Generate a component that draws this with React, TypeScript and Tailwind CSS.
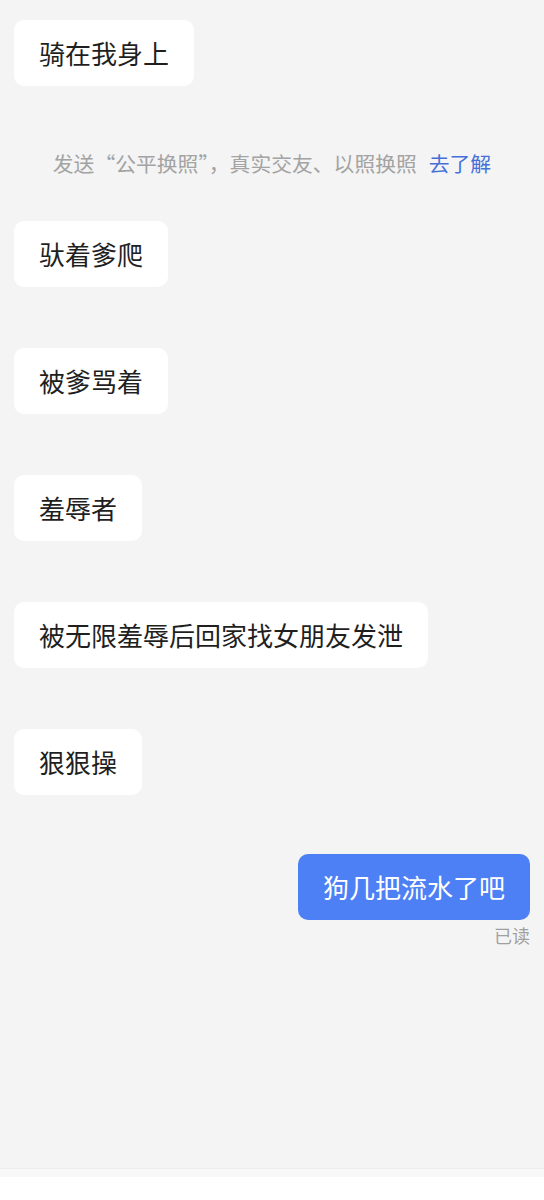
const font = {
  fontFamily: '"Noto Sans CJK SC", "Noto Sans", sans-serif',
};

const incoming: string[] = [
  "驮着爹爬",
  "被爹骂着",
  "羞辱者",
  "被无限羞辱后回家找女朋友发泄",
  "狠狠操",
];

const Bubble = ({ text }: { text: string }) => (
  <div className="flex justify-start">
    <div className="rounded-[10px] bg-white px-[25px] py-[16px] text-[26px] leading-[34px] text-[#1f1f1f]">
      {text}
    </div>
  </div>
);

export default function App() {
  return (
    <div className="flex h-[1200px] w-[544px] flex-col bg-white" style={font}>
      <div className="flex h-[1168px] flex-col bg-[#f4f4f4] px-[14px] pt-[20px]">
        <Bubble text="骑在我身上" />

        <div className="mt-[64px] mb-[45px] flex items-center justify-center text-[20.8px] leading-[26px] text-[#a3a3a3]">
          <span>发送“公平换照”，真实交友、以照换照</span>
          <span className="ml-[12px] text-[#4670d8]">去了解</span>
        </div>

        <div className="flex flex-col gap-[61px]">
          {incoming.map((text) => (
            <Bubble key={text} text={text} />
          ))}

          <div className="-mt-[2px] flex flex-col items-end">
            <div className="rounded-[10px] bg-[#4d80f5] px-[25px] py-[16px] text-[26px] leading-[34px] text-white">
              狗几把流水了吧
            </div>
            <div className="mt-[2px] text-[18px] leading-[26px] text-[#a0a0a0]">
              已读
            </div>
          </div>
        </div>
      </div>
      <div className="h-[9px] border-t border-[#ededed] bg-[#f8f8f8]" />
    </div>
  );
}
